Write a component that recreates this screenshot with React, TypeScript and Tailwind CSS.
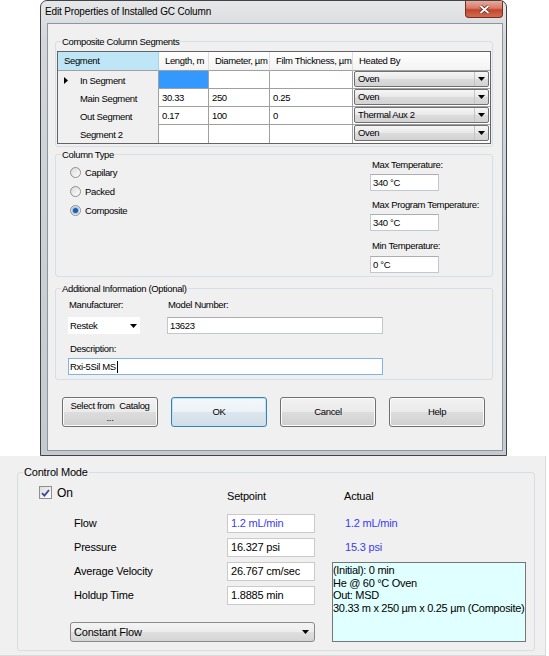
const SANS = "font-['Liberation_Sans',Arial,sans-serif]";

const segments = [
  { name: "In Segment", len: "", dia: "", film: "", heat: "Oven", current: true },
  { name: "Main Segment", len: "30.33", dia: "250", film: "0.25", heat: "Oven" },
  { name: "Out Segment", len: "0.17", dia: "100", film: "0", heat: "Thermal Aux 2" },
  { name: "Segment 2", len: "", dia: "", film: "", heat: "Oven" },
];

function DownArrow() {
  return (
    <svg width="7" height="4" viewBox="0 0 7 4">
      <path d="M0 0h7L3.5 4z" fill="#000" />
    </svg>
  );
}

function CellCombo({ value }: { value: string }) {
  return (
    <div className="mx-[1px] h-[16px] flex rounded-[2px] border border-[#707070] bg-[linear-gradient(#f6f6f6,#e8e8e8_50%,#dcdcdc_50%,#d3d3d3)]">
      <span className="flex-1 pl-[3px] leading-[14px]">{value}</span>
      <span className="w-[14px] flex items-center justify-center border-l border-[#c4c4c4]">
        <DownArrow />
      </span>
    </div>
  );
}

function TextBox({ value, className = "" }: { value: string; className?: string }) {
  return (
    <div
      className={`h-[17px] border border-[#c3c8ce] border-t-[#abadb3] bg-white pl-[2px] leading-[15px] ${className}`}
    >
      {value}
    </div>
  );
}

function Radio({ label, checked }: { label: string; checked?: boolean }) {
  return (
    <div className="h-[19px] flex items-center">
      <span className="w-[11px] h-[11px] rounded-full border border-[#8e8f8f] bg-[linear-gradient(135deg,#d9d9d9,#ffffff)] flex items-center justify-center">
        {checked && (
          <span className="w-[5px] h-[5px] rounded-full bg-[#1c5cab] shadow-[0_0_1px_1px_#8fbbe8]" />
        )}
      </span>
      <span className="ml-[4px]">{label}</span>
    </div>
  );
}

function WinButton({
  children,
  primary,
}: {
  children: React.ReactNode;
  primary?: boolean;
}) {
  return (
    <button
      className={`w-[96px] h-[30px] rounded-[3px] border leading-[12px] text-black whitespace-nowrap ${
        primary
          ? "border-[#3c7fb1] shadow-[inset_0_0_0_1px_#bde4f7] bg-[linear-gradient(#f4f8fb,#ebf2f7_50%,#dde6ee_50%,#d2dde6)]"
          : "border-[#707070] shadow-[inset_0_0_0_1px_#fbfbfb] bg-[linear-gradient(#f2f2f2,#ebebeb_50%,#dddddd_50%,#cfcfcf)]"
      }`}
    >
      {children}
    </button>
  );
}

function CloseButton() {
  return (
    <div className="w-[38px] h-[17px] rounded-b-[4px] border border-t-0 border-[#7a2a1e] bg-[linear-gradient(#e8aa9e,#d77964_45%,#c2452f_55%,#cf6c52)] flex items-center justify-center">
      <svg width="11" height="9" viewBox="0 0 11 9">
        <path d="M1.5 1L9.5 8M9.5 1L1.5 8" stroke="#5a2018" strokeWidth="3.2" />
        <path d="M1.5 1L9.5 8M9.5 1L1.5 8" stroke="#fff" strokeWidth="1.8" />
      </svg>
    </div>
  );
}

function SegmentGrid() {
  const head = "h-[19px] pl-[6px] leading-[18px] border-b border-[#a0a0a0] whitespace-nowrap overflow-hidden";
  const cell = "h-[18px] border-r border-[#a0a0a0] pl-[3px] leading-[17px]";
  return (
    <div className="mt-[3px] w-[434px] border border-[#646464] bg-white grid grid-cols-[101px_50px_61px_83px_137px]">
      <div className={`${head} bg-[#bfe6f6] border-r border-r-[#a9d3e4]`}>Segment</div>
      <div className={`${head} bg-[linear-gradient(#ffffff,#f3f3f3)] border-r border-r-[#dedede]`}>Length, m</div>
      <div className={`${head} bg-[linear-gradient(#ffffff,#f3f3f3)] border-r border-r-[#dedede]`}>Diameter, µm</div>
      <div className={`${head} bg-[linear-gradient(#ffffff,#f3f3f3)] border-r border-r-[#dedede]`}>
        Film Thickness, µm
      </div>
      <div className={`${head} bg-[linear-gradient(#ffffff,#f3f3f3)]`}>Heated By</div>
      {segments.map((s, i) => {
        const last = i === segments.length - 1;
        const bottom = last ? "" : "border-b";
        return (
          <div key={s.name} className="contents">
            <div className="h-[18px] bg-[#f0f0f0] border-r border-[#a0a0a0] pl-[6px] flex items-center">
              <span className="w-[16px] flex items-center">
                {s.current && (
                  <svg width="4" height="7" viewBox="0 0 4 7">
                    <path d="M0 0L4 3.5L0 7z" fill="#000" />
                  </svg>
                )}
              </span>
              <span>{s.name}</span>
            </div>
            <div className={`${cell} ${bottom} ${s.current ? "bg-[#3399ff]" : ""}`}>{s.len}</div>
            <div className={`${cell} ${bottom}`}>{s.dia}</div>
            <div className={`${cell} ${bottom}`}>{s.film}</div>
            <div className={`h-[18px] border-[#a0a0a0] ${bottom}`}>
              <CellCombo value={s.heat} />
            </div>
          </div>
        );
      })}
    </div>
  );
}

function Dialog() {
  return (
    <div
      className={`ml-[40px] w-[467px] h-[456px] rounded-t-[7px] border border-[#404448] bg-[linear-gradient(#e6e7e8,#d3d7db_40px,#c4cad0)] ${SANS}`}
    >
      <div className="h-[22px] flex items-start justify-between pl-[4px] pr-[3px]">
        <span className="mt-[4px] text-[10px] tracking-[-0.15px] leading-[14px]">
          Edit Properties of Installed GC Column
        </span>
        <CloseButton />
      </div>
      <div className="ml-[6px] w-[456px] h-[428px] border border-[#8d959d] bg-[#f0f0f0] pl-[7px] pt-[11px] text-[9.5px] tracking-[-0.35px] leading-[13px]">
        <fieldset className="w-[438px] rounded-[3px] border border-[#d5dfe5] px-[1px] pb-[2px]">
          <legend className="ml-[4px] px-[1px] leading-[13px]">Composite Column Segments</legend>
          <SegmentGrid />
        </fieldset>

        <fieldset className="mt-[1px] w-[438px] rounded-[3px] border border-[#d5dfe5] pb-[3px]">
          <legend className="ml-[5px] px-[1px] leading-[13px]">Column Type</legend>
          <div className="flex">
            <div className="w-[314px] pl-[14px] pt-[2px]">
              <Radio label="Capilary" />
              <Radio label="Packed" />
              <Radio label="Composite" checked />
            </div>
            <div className="-mt-[3px] flex flex-col">
              <span className="pl-[2px] whitespace-nowrap">Max Temperature:</span>
              <TextBox className="mt-[3px] w-[69px]" value="340 °C" />
              <span className="mt-[7px] pl-[2px] whitespace-nowrap">Max Program Temperature:</span>
              <TextBox className="mt-[3px] w-[69px]" value="340 °C" />
              <span className="mt-[8px] pl-[2px] whitespace-nowrap">Min Temperature:</span>
              <TextBox className="mt-[4px] w-[69px]" value="0 °C" />
            </div>
          </div>
        </fieldset>

        <fieldset className="mt-[5px] w-[438px] rounded-[3px] border border-[#d5dfe5] pb-[4px]">
          <legend className="ml-[5px] px-[1px] leading-[13px]">Additional Information (Optional)</legend>
          <div className="mt-[3px] pl-[12px] grid grid-cols-[99px_216px]">
            <span className="pl-[1px]">Manufacturer:</span>
            <span className="pl-[1px]">Model Number:</span>
            <div className="mt-[6px] w-[72px] h-[17px] bg-white flex items-center justify-between pl-[2px] pr-[3px]">
              <span>Restek</span>
              <DownArrow />
            </div>
            <TextBox className="mt-[6px]" value="13623" />
            <span className="col-span-2 mt-[8px] pl-[2px]">Description:</span>
            <div className="col-span-2 mt-[3px] h-[17px] border border-[#7eb4ea] bg-white pl-[1px] flex items-center">
              <span>Rxi-5Sil MS</span>
              <span className="ml-[1px] w-px h-[12px] bg-black" />
            </div>
          </div>
        </fieldset>

        <div className="mt-[17px] ml-[7px] flex gap-[13px]">
          <WinButton>
            Select from&nbsp; Catalog
            <br />
            ...
          </WinButton>
          <WinButton primary>OK</WinButton>
          <WinButton>Cancel</WinButton>
          <WinButton>Help</WinButton>
        </div>
      </div>
    </div>
  );
}

function ControlPanel() {
  const input = "h-[19px] border border-[#cacaca] bg-white pl-[3px] leading-[17px]";
  return (
    <div className="w-[546px] h-[200px] bg-[#f0f0f0] border-r border-b border-[#dadada] pt-[9px] pl-[17px] font-['Liberation_Sans',Arial,sans-serif] text-[11px] tracking-[-0.2px]">
      <fieldset className="w-[518px] rounded-[3px] border border-[#d8dde2] pb-[8px]">
        <legend className="ml-[5px] px-[1px] leading-[15px]">Control Mode</legend>
        <div className="mt-[6px] pl-[52px] grid grid-cols-[157px_88px_17px_194px] grid-rows-[23px_19px_19px_19px_19px_32px] gap-y-[5px]">
          <div className="-ml-[31px] h-[13px] flex items-center">
            <span className="w-[13px] h-[13px] border border-[#8e8f8f] bg-[linear-gradient(135deg,#dcdcdc,#ffffff)] flex items-center justify-center">
              <svg width="9" height="8" viewBox="0 0 9 8">
                <path d="M1 4.2L3.4 6.6L8 1" fill="none" stroke="#34489a" strokeWidth="1.8" />
              </svg>
            </span>
            <span className="ml-[5px] text-[12px]">On</span>
          </div>
          <span className="pt-[3px] leading-[15px]">Setpoint</span>
          <span className="col-start-4 pt-[3px] pl-[12px] leading-[15px]">Actual</span>

          <span className="col-start-1 pl-[4px] leading-[19px]">Flow</span>
          <div className={`${input} text-[#3b3bf2]`}>1.2 mL/min</div>
          <span className="col-start-4 pl-[13px] leading-[19px] text-[#3b3bf2]">1.2 mL/min</span>

          <span className="col-start-1 pl-[4px] leading-[19px]">Pressure</span>
          <div className={input}>16.327 psi</div>
          <span className="col-start-4 pl-[13px] leading-[19px] text-[#3b3bf2]">15.3 psi</span>

          <span className="col-start-1 pl-[4px] leading-[19px]">Average Velocity</span>
          <div className={input}>26.767 cm/sec</div>
          <div className="col-start-4 row-start-4 row-span-3 border border-[#767676] bg-[#e0ffff] pt-[1px] leading-[12.5px] tracking-[-0.3px]">
            (Initial): 0 min
            <br />
            He @ 60 °C Oven
            <br />
            Out: MSD
            <br />
            30.33 m x 250 µm x 0.25 µm (Composite)
          </div>

          <span className="col-start-1 row-start-5 pl-[4px] leading-[19px]">Holdup Time</span>
          <div className={`${input} row-start-5 col-start-2`}>1.8885 min</div>

          <div className="col-start-1 col-span-2 row-start-6 self-end h-[20px] rounded-[3px] border border-[#8a8a8a] bg-[linear-gradient(#f4f4f4,#ececec_50%,#dfdfdf_50%,#d5d5d5)] flex items-center">
            <span className="flex-1 pl-[3px]">Constant Flow</span>
            <span className="w-[17px] flex items-center justify-center">
              <DownArrow />
            </span>
          </div>
        </div>
      </fieldset>
    </div>
  );
}

export default function App() {
  return (
    <div className="w-[549px] h-[656px] bg-white overflow-hidden text-black">
      <Dialog />
      <ControlPanel />
    </div>
  );
}
